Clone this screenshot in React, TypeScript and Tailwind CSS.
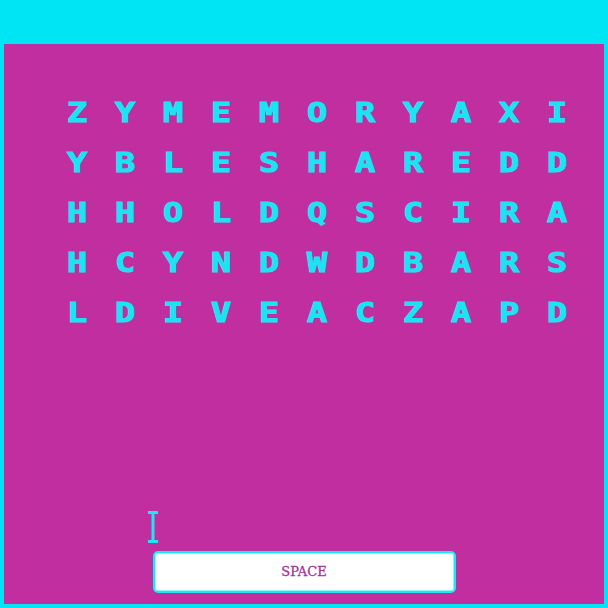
const rows = [
  'ZYMEMORYAXI',
  'YBLESHAREDD',
  'HHOLDQSCIRA',
  'HCYNDWDBARS',
  'LDIVEACZAPD',
]

export default function App() {
  return (
    <div className="w-[608px] h-[608px] bg-[#00e5f3] pt-[44px] px-[4px] pb-[4px]">
      <div className="relative flex flex-col h-full bg-[#c02e9f]">
        <div className="pt-[43px] pl-[49px]">
          {rows.map((row, r) => (
            <div key={r} className="flex h-[50px]">
              {row.split('').map((ch, c) => (
                <div
                  key={c}
                  className="flex w-[48px] items-center justify-center"
                >
                  <span className="scale-x-125 text-[27px] leading-none font-bold text-[#1ce3f3] [-webkit-text-stroke:1px_#1ce3f3] font-['DejaVu_Sans_Mono',monospace]">
                    {ch}
                  </span>
                </div>
              ))}
            </div>
          ))}
        </div>

        <div className="flex-1" />

        <div className="mx-auto mb-[11px] flex h-[42px] w-[303px] items-center justify-center rounded-[5px] border-2 border-[#1ee6f4] bg-white shadow-[inset_0_0_0_1px_#8ff3fa]">
          <span className="text-[13px] text-[#a8329a] [-webkit-text-stroke:0.3px_#a8329a] font-['DejaVu_Serif',serif]">
            SPACE
          </span>
        </div>

        {/* text cursor caught in the screenshot */}
        <svg
          className="absolute left-[144px] top-[467px]"
          width="10"
          height="32"
          viewBox="0 0 10 32"
        >
          <rect x="0" y="0" width="10" height="3" fill="#1ee6f4" />
          <rect x="3.5" y="2" width="3" height="28" fill="#1ee6f4" />
          <rect x="0" y="29" width="10" height="3" fill="#1ee6f4" />
        </svg>
      </div>
    </div>
  )
}
